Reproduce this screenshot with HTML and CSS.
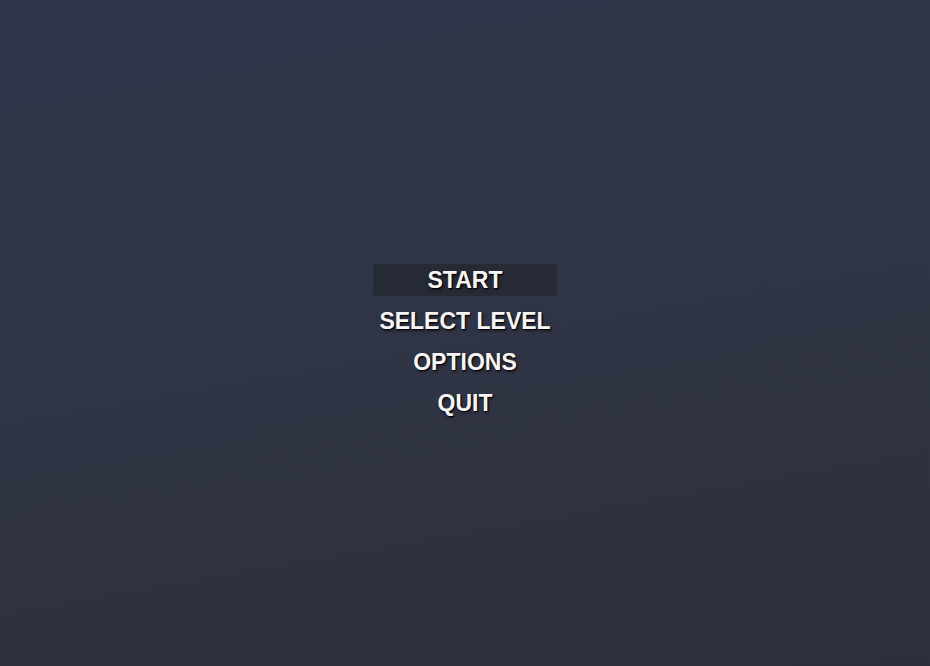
FILE: index.html
```html
<!DOCTYPE html>
<html>
<head>
<meta charset="utf-8">
<link rel="stylesheet" href="styles.css">
</head>
<body>
<main class="screen">
  <nav class="menu">
    <div class="item active">START</div>
    <div class="item">SELECT LEVEL</div>
    <div class="item">OPTIONS</div>
    <div class="item">QUIT</div>
  </nav>
</main>
</body>
</html>
```
FILE: styles.css
```css
html, body {
  margin: 0;
  padding: 0;
  width: 930px;
  height: 666px;
  overflow: hidden;
}
.screen {
  width: 930px;
  height: 666px;
  box-sizing: border-box;
  padding-top: 264px;
  display: flex;
  justify-content: center;
  background: linear-gradient(170deg, #31374a 0%, #303546 45%, #2d303b 100%);
}
.menu {
  display: flex;
  flex-direction: column;
  gap: 9px;
  width: 184px;
}
.item {
  height: 32px;
  line-height: 32px;
  text-align: center;
  font-family: "Liberation Sans", Arial, sans-serif;
  font-weight: bold;
  font-size: 23px;
  color: #f6f6f6;
  text-shadow: 1px 1px 1px rgba(0, 0, 0, 0.9), 1px 2px 3px rgba(0, 0, 0, 0.5);
  white-space: nowrap;
  border-radius: 4px;
}
.item.active {
  background: #262a35;
}
```
